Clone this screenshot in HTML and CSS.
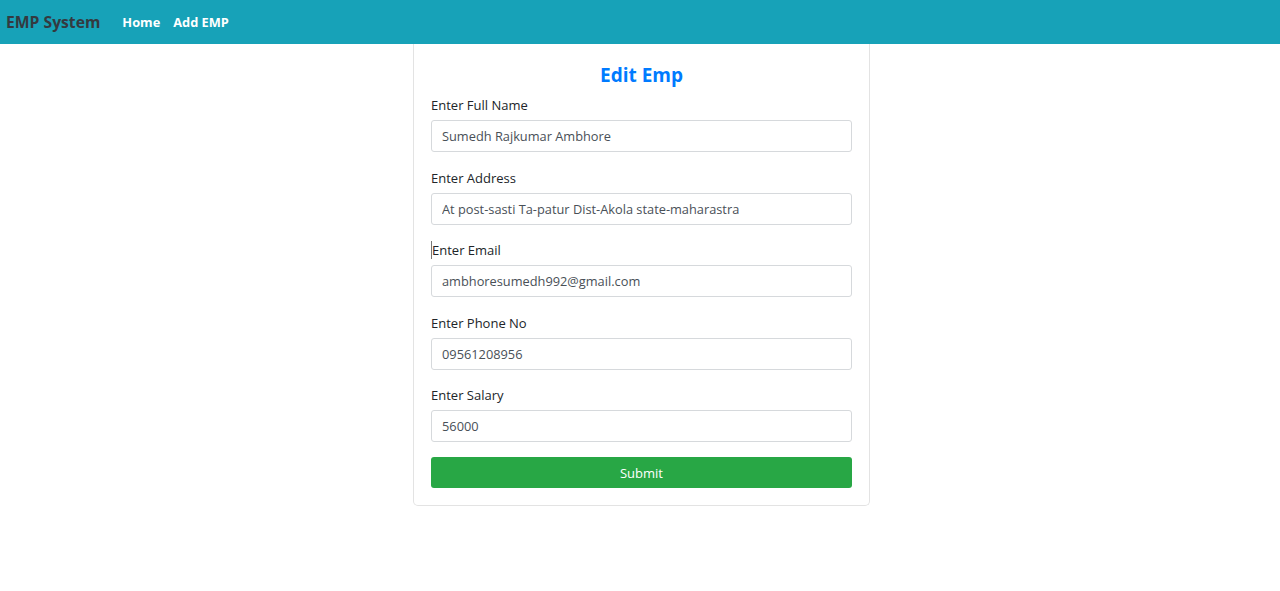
FILE: index.html
```html
<!DOCTYPE html>
<html lang="en">
<head>
<meta charset="utf-8">
<title>EMP System</title>
<link rel="stylesheet" href="styles.css">
</head>
<body>
<nav class="navbar">
  <span class="brand">EMP System</span>
  <a class="nav-link" href="#">Home</a>
  <a class="nav-link" href="#">Add EMP</a>
</nav>
<main class="page">
  <form class="card">
    <h2 class="title">Edit Emp</h2>
    <div class="group">
      <label class="label">Enter Full Name</label>
      <input class="input" type="text" value="Sumedh Rajkumar Ambhore">
    </div>
    <div class="group">
      <label class="label">Enter Address</label>
      <input class="input" type="text" value="At post-sasti Ta-patur Dist-Akola state-maharastra">
    </div>
    <div class="group">
      <label class="label caret">Enter Email</label>
      <input class="input" type="text" value="ambhoresumedh992@gmail.com">
    </div>
    <div class="group">
      <label class="label">Enter Phone No</label>
      <input class="input" type="text" value="09561208956">
    </div>
    <div class="group last">
      <label class="label">Enter Salary</label>
      <input class="input" type="text" value="56000">
    </div>
    <button class="btn" type="button">Submit</button>
  </form>
</main>
</body>
</html>
```
FILE: styles.css
```css
* { box-sizing: border-box; }
body {
  margin: 0;
  font-family: "Open Sans", "Noto Sans", sans-serif;
  color: #212529;
  background: #fff;
}
.navbar {
  height: 44px;
  background: #17a2b8;
  display: flex;
  align-items: center;
  padding: 0 6px;
}
.brand {
  font-weight: 700;
  font-size: 15.7px;
  color: #343a40;
  margin-right: 22px;
}
.nav-link {
  color: #fff;
  font-weight: 700;
  font-size: 12.8px;
  text-decoration: none;
  margin-right: 13px;
}
.page {
  display: flex;
  justify-content: center;
  padding-left: 3px;
}
.card {
  width: 457px;
  border: 1px solid #e3e3e3;
  border-top: none;
  border-radius: 0 0 5px 5px;
  padding: 18px 17px 17px;
  display: flex;
  flex-direction: column;
}
.title {
  margin: 0 0 8px;
  text-align: center;
  color: #007bff;
  font-size: 19px;
  font-weight: 700;
  line-height: 26px;
}
.group {
  display: flex;
  flex-direction: column;
  margin-bottom: 16.5px;
}
.group.last {
  margin-bottom: 15px;
}
.label {
  font-size: 13px;
  line-height: 18px;
  margin-bottom: 6px;
  color: #212529;
}
.caret {
  border-left: 1px solid #777;
}
.input {
  height: 32px;
  border: 1px solid #d6d9dc;
  border-radius: 3px;
  padding: 0 10px;
  font-family: inherit;
  font-size: 12.8px;
  color: #495057;
}
.btn {
  height: 31px;
  border: none;
  border-radius: 3px;
  background: #28a745;
  color: #fff;
  font-family: inherit;
  font-size: 13px;
}
```
